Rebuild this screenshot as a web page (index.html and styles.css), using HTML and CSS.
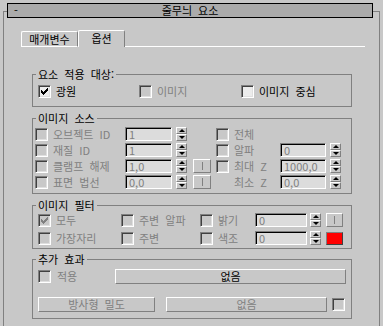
FILE: index.html
```html
<!DOCTYPE html>
<html lang="ko">
<head>
  <meta charset="UTF-8">
  <title>줄무늬 요소</title>
  <link rel="stylesheet" href="styles.css">
</head>
<body>
  <div class="titlebar"><span class="collapse">-</span><span class="title">줄무늬 요소</span><span></span></div>
  <div class="rollout">
    <div class="tabs">
      <div class="tab">매개변수</div>
      <div class="tab active">옵션</div>
      <div class="tab-rest"></div>
    </div>

    <!-- 요소 적용 대상 -->
    <div class="group g-apply">
      <div class="group-title">요소 적용 대상:</div>
      <div class="apply-row">
        <span class="cb on"><svg width="7" height="7" viewBox="0 0 7 7"><path d="M0.5 2v3M1.5 3v3M2.5 4v3M3.5 3v3M4.5 2v3M5.5 1v3M6.5 0v3" stroke="#000"/></svg></span>
        <span class="lbl">광원</span>
        <span class="cb"></span>
        <span class="lbl off">이미지</span>
        <span class="cb on"></span>
        <span class="lbl">이미지 중심</span>
      </div>
    </div>

    <!-- 이미지 소스 -->
    <div class="group g-source">
      <div class="group-title">이미지 소스</div>
      <div class="src-row first">
        <span class="cb s-cb1"></span><span class="lbl off s-lab1">오브젝트 ID</span>
        <span class="num s-in1">1</span><span class="spin s-sp1"><i class="up"></i><i class="dn"></i></span>
        <span class="cb s-cb2"></span><span class="lbl off s-lab2">전체</span>
      </div>
      <div class="src-row">
        <span class="cb s-cb1"></span><span class="lbl off s-lab1">재질 ID</span>
        <span class="num s-in1">1</span><span class="spin s-sp1"><i class="up"></i><i class="dn"></i></span>
        <span class="cb s-cb2"></span><span class="lbl off s-lab2">알파</span>
        <span class="num s-in2">0</span><span class="spin s-sp2"><i class="up"></i><i class="dn"></i></span>
      </div>
      <div class="src-row">
        <span class="cb s-cb1"></span><span class="lbl off s-lab1">클램프 해제</span>
        <span class="num s-in1">1,0</span><span class="spin s-sp1"><i class="up"></i><i class="dn"></i></span>
        <span class="mini s-btn"><b></b></span>
        <span class="cb s-cb2"></span><span class="lbl off s-lab2">최대 Z</span>
        <span class="num s-in2">1000,0</span><span class="spin s-sp2"><i class="up"></i><i class="dn"></i></span>
      </div>
      <div class="src-row">
        <span class="cb s-cb1"></span><span class="lbl off s-lab1">표면 법선</span>
        <span class="num s-in1">0,0</span><span class="spin s-sp1"><i class="up"></i><i class="dn"></i></span>
        <span class="mini s-btn"><b></b></span>
        <span class="lbl off s-lab2">최소 Z</span>
        <span class="num s-in2">0,0</span><span class="spin s-sp2"><i class="up"></i><i class="dn"></i></span>
      </div>
    </div>

    <!-- 이미지 필터 -->
    <div class="group g-filter">
      <div class="group-title">이미지 필터</div>
      <div class="flt-row first">
        <span class="cb"><svg width="7" height="7" viewBox="0 0 7 7"><path d="M0.5 2v3M1.5 3v3M2.5 4v3M3.5 3v3M4.5 2v3M5.5 1v3M6.5 0v3" stroke="#808080"/></svg></span>
        <span class="lbl off">모두</span>
        <span class="cb"></span><span class="lbl off">주변 알파</span>
        <span class="cb"></span><span class="lbl off">밝기</span>
        <span class="num wide">0</span><span class="spin"><i class="up"></i><i class="dn"></i></span>
        <span class="mini f-btn"><b></b></span>
      </div>
      <div class="flt-row">
        <span class="cb"></span><span class="lbl off">가장자리</span>
        <span class="cb"></span><span class="lbl off">주변</span>
        <span class="cb"></span><span class="lbl off">색조</span>
        <span class="num wide">0</span><span class="spin"><i class="up"></i><i class="dn"></i></span>
        <span class="swatch f-btn"></span>
      </div>
    </div>

    <!-- 추가 효과 -->
    <div class="group g-extra">
      <div class="group-title">추가 효과</div>
      <div class="fx-row first">
        <span class="cb"></span><span class="lbl off">적용</span>
        <span class="btn">없음</span>
      </div>
      <div class="fx-row second">
        <span class="btn off">방사형 밀도</span>
        <span class="btn off">없음</span>
        <span class="cb"></span>
      </div>
    </div>
  </div>
</body>
</html>
```

FILE: styles.css
```css
html, body {
  margin: 0;
  background: #c8c8c8;
  font-family: "Noto Sans CJK KR", sans-serif;
  font-size: 11px;
  word-spacing: 3px;
  color: #000;
  overflow: hidden;
}
body {
  padding-top: 3px;
}
.titlebar {
  position: relative;
  z-index: 1;
  display: grid;
  grid-template-columns: 20px 1fr 20px;
  box-sizing: border-box;
  margin-left: 7px;
  width: 366px;
  height: 15px;
  border: 1px solid #000;
  background: #ababab;
  line-height: 13px;
}
.collapse {
  padding-left: 6px;
}
.title {
  text-align: center;
}
.rollout {
  box-sizing: border-box;
  margin: -7px 0 0 3px;
  width: 377px;
  height: 330px;
  border: 1px solid #808080;
  border-bottom: none;
}

/* tabs */
.tabs {
  display: flex;
  align-items: flex-end;
  margin: 18px 0 0 17px;
  width: 344px;
  height: 17px;
}
.tab {
  box-sizing: border-box;
  width: 57px;
  height: 16px;
  border: 1px solid #fff;
  border-right-color: #808080;
  border-radius: 2px 2px 0 0;
  text-align: center;
  line-height: 14px;
}
.tab.active {
  width: 47px;
  height: 17px;
  border-bottom: none;
}
.tab-rest {
  flex: 1;
  border-bottom: 1px solid #fff;
}

/* groups */
.group {
  box-sizing: border-box;
  margin-left: 28px;
  width: 320px;
  border: 1px solid #808080;
}
.group-title {
  width: fit-content;
  height: 13px;
  margin: -7px 0 0 3px;
  padding: 0 2px;
  background: #c8c8c8;
  line-height: 13px;
}
.g-apply { margin-top: 27px; padding-bottom: 7px; }
.g-source { margin-top: 11px; padding-bottom: 3px; }
.g-filter { margin-top: 11px; padding-bottom: 2px; }
.g-extra { margin-top: 10px; padding-bottom: 6px; }

.lbl {
  white-space: nowrap;
  padding-left: 5px;
  line-height: 16px;
}
.off {
  color: #808080;
}

/* checkbox */
.cb {
  box-sizing: border-box;
  display: flex;
  align-items: center;
  justify-content: center;
  width: 13px;
  height: 13px;
  border: 1px solid;
  border-color: #808080 #fff #fff #808080;
  box-shadow: inset 1px 1px #404040, inset -1px -1px #dfdfdf;
  background: #c8c8c8;
}
.cb.on {
  background: #ececec;
}

/* number field + spinner */
.num {
  box-sizing: border-box;
  width: 47px;
  height: 14px;
  padding-left: 3px;
  border: 1px solid;
  border-color: #808080 #fff #fff #808080;
  box-shadow: inset 1px 1px #000;
  background: #dcdcdc;
  color: #808080;
  line-height: 12px;
}
.spin {
  display: flex;
  flex-direction: column;
  width: 11px;
  height: 14px;
}
.spin i {
  box-sizing: border-box;
  flex: 1;
  display: flex;
  align-items: center;
  justify-content: center;
  border: 1px solid;
  border-color: #fff #808080 #808080 #fff;
}
.spin i::before {
  content: "";
  border-left: 3px solid transparent;
  border-right: 3px solid transparent;
}
.spin .up::before { border-bottom: 3px solid #000; }
.spin .dn::before { border-top: 3px solid #000; }

.mini {
  box-sizing: border-box;
  display: flex;
  align-items: center;
  justify-content: center;
  height: 14px;
  border: 1px solid;
  border-color: #fff #808080 #808080 #fff;
}
.mini b {
  width: 1px;
  height: 8px;
  background: #808080;
}
.swatch {
  box-sizing: border-box;
  height: 13px;
  border: 1px solid;
  border-color: #808080 #404040 #404040 #808080;
  background: #ff0000;
}
.btn {
  box-sizing: border-box;
  height: 15px;
  border: 1px solid;
  border-color: #fff #808080 #808080 #fff;
  text-align: center;
  line-height: 13px;
}

/* rows */
.apply-row {
  display: grid;
  grid-template-columns: 13px 88px 13px 89px 13px auto;
  align-items: center;
  height: 16px;
  margin-top: 2px;
  padding-left: 5px;
}
.src-row {
  display: grid;
  grid-template-columns: 13px 77px 47px 4px 11px 6px 18px 5px 13px 51px 46px 4px 11px;
  align-items: center;
  height: 16px;
  padding-left: 2px;
}
.src-row.first { margin-top: 1px; }
.s-cb1 { grid-column: 1; }
.s-lab1 { grid-column: 2; }
.s-in1 { grid-column: 3; }
.s-sp1 { grid-column: 5; }
.s-btn { grid-column: 7; }
.s-cb2 { grid-column: 9; }
.s-lab2 { grid-column: 10; }
.s-in2 { grid-column: 11; width: 46px; }
.s-sp2 { grid-column: 13; }

.flt-row {
  display: grid;
  grid-template-columns: 13px 70px 13px 66px 13px 42px 52px 11px 17px;
  align-items: center;
  height: 16px;
  margin-top: 2px;
  padding-left: 5px;
}
.flt-row.first { margin-top: 0; }
.num.wide { width: 52px; }
.flt-row .spin { margin-left: 3px; }
.f-btn { margin-left: 8px; width: 17px; }

.fx-row {
  display: grid;
  align-items: center;
  height: 16px;
  padding-left: 5px;
}
.fx-row.first {
  grid-template-columns: 13px 64px 231px;
  margin-top: 2px;
}
.fx-row.first .lbl { padding-left: 6px; }
.fx-row.second {
  grid-template-columns: 117px 172px 18px;
  margin-top: 12px;
}
.fx-row.second .btn:nth-child(2) { margin-left: 11px; }
.fx-row.second .cb { margin-left: 5px; }
```
